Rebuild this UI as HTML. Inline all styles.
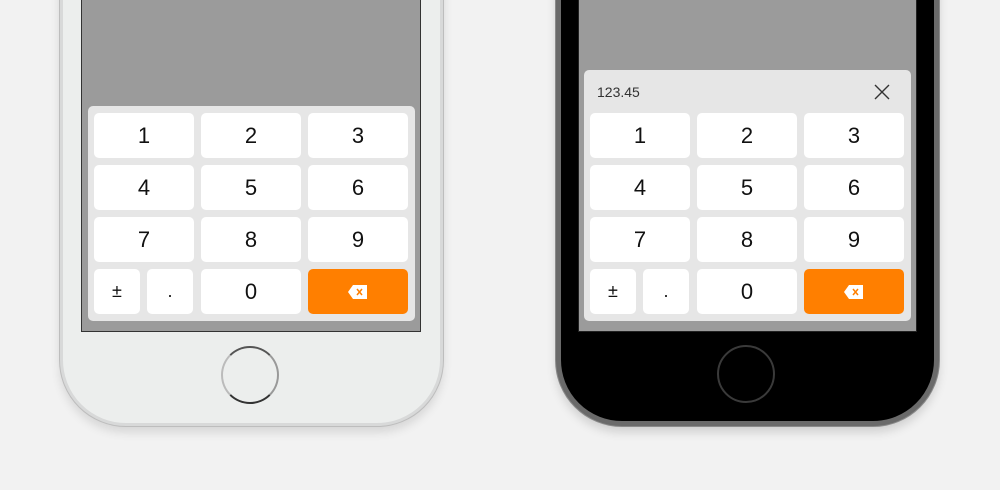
<!DOCTYPE html>
<html><head><style>
*{margin:0;padding:0;box-sizing:border-box}
body{width:1000px;height:490px;background:#f2f2f2;position:relative;overflow:hidden;font-family:"Liberation Sans",sans-serif}
.abs{position:absolute}
.phone{position:absolute;top:-80px;width:383px;height:506px;border-radius:0 0 66px 66px}
.w{left:60px;background:#eceeed;border:3px solid #d8d9d9;box-shadow:0 0 0 1px #bdbdbd,0 6px 10px rgba(0,0,0,.12)}
.b{left:556px;background:#000;border:5px solid #6a6a6a;box-shadow:0 0 0 1px #8a8a8a,0 6px 10px rgba(0,0,0,.15)}
.screen{position:absolute;top:0;height:332px;background:#9b9b9b}
.panel{position:absolute;background:#e6e6e6;border-radius:5px}
.k{position:absolute;background:#fff;border-radius:5px;width:100px;height:45px;display:flex;align-items:center;justify-content:center;font-size:22px;color:#111}
.s{width:46px;font-size:18px}
.o{background:#ff7f00}
.home{position:absolute;width:58px;height:58px;border-radius:50%}
</style></head><body>
<div class="phone w"></div>
<div class="phone b"></div>
<div class="screen" style="left:81px;width:340px;border:1px solid #333;border-top:none"></div>
<div class="screen" style="left:578px;width:339px;border:1px solid #222;border-top:none"></div>
<div class="home" style="left:221px;top:346px;border:2px solid #333;border-left-color:#bbb;border-top-color:#555;border-right-color:#999"></div>
<div class="home" style="left:717px;top:345px;border:2px solid #3a3a3a"></div>

<div class="panel" style="left:88px;top:106px;width:327px;height:215px"></div>
<div class="panel" style="left:584px;top:70px;width:327px;height:251px"></div>
<div class="abs" style="left:597px;top:84px;font-size:14px;color:#333">123.45</div>
<svg class="abs" style="left:873px;top:83px" width="18" height="18"><path d="M2 2L16 16M16 2L2 16" stroke="#333" stroke-width="1.4"/></svg>

<!-- left keys -->
<div class="k" style="left:94px;top:113px">1</div><div class="k" style="left:201px;top:113px">2</div><div class="k" style="left:308px;top:113px">3</div>
<div class="k" style="left:94px;top:165px">4</div><div class="k" style="left:201px;top:165px">5</div><div class="k" style="left:308px;top:165px">6</div>
<div class="k" style="left:94px;top:217px">7</div><div class="k" style="left:201px;top:217px">8</div><div class="k" style="left:308px;top:217px">9</div>
<div class="k s" style="left:94px;top:269px">±</div><div class="k s" style="left:147px;top:269px">.</div><div class="k" style="left:201px;top:269px">0</div>
<div class="k o" style="left:308px;top:269px"><svg width="20" height="14"><path d="M5 0H19V14H5L0 7Z" fill="#fff"/><path d="M9 4L14 10M14 4L9 10" stroke="#ff7f00" stroke-width="1.5"/></svg></div>
<!-- right keys -->
<div class="k" style="left:590px;top:113px">1</div><div class="k" style="left:697px;top:113px">2</div><div class="k" style="left:804px;top:113px">3</div>
<div class="k" style="left:590px;top:165px">4</div><div class="k" style="left:697px;top:165px">5</div><div class="k" style="left:804px;top:165px">6</div>
<div class="k" style="left:590px;top:217px">7</div><div class="k" style="left:697px;top:217px">8</div><div class="k" style="left:804px;top:217px">9</div>
<div class="k s" style="left:590px;top:269px">±</div><div class="k s" style="left:643px;top:269px">.</div><div class="k" style="left:697px;top:269px">0</div>
<div class="k o" style="left:804px;top:269px"><svg width="20" height="14"><path d="M5 0H19V14H5L0 7Z" fill="#fff"/><path d="M9 4L14 10M14 4L9 10" stroke="#ff7f00" stroke-width="1.5"/></svg></div>
</body></html>
